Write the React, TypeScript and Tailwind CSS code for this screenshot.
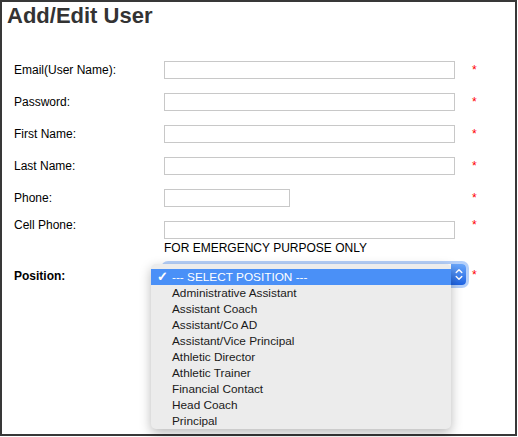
import React from 'react';

const simpleRows = [
  { label: 'Email(User Name):', wide: true },
  { label: 'Password:', wide: true },
  { label: 'First Name:', wide: true },
  { label: 'Last Name:', wide: true },
  { label: 'Phone:', wide: false },
];

const positions = [
  'Administrative Assistant',
  'Assistant Coach',
  'Assistant/Co AD',
  'Assistant/Vice Principal',
  'Athletic Director',
  'Athletic Trainer',
  'Financial Contact',
  'Head Coach',
  'Principal',
];

const Required = ({ className = '' }: { className?: string }) => (
  <span className={`text-[12px] text-[#ff0000] ${className}`}>*</span>
);

const TextBox = ({ wide }: { wide: boolean }) => (
  <div
    className={`h-[18px] border border-[#c8c8c8] bg-white ${wide ? 'w-[291px]' : 'w-[126px]'}`}
  />
);

const Stepper = () => (
  <svg width="8" height="13" viewBox="0 0 8 13" fill="none">
    <path d="M1.2 4.6 L4 1.8 L6.8 4.6" stroke="white" strokeWidth="1.4" strokeLinecap="round" strokeLinejoin="round" />
    <path d="M1.2 8.4 L4 11.2 L6.8 8.4" stroke="white" strokeWidth="1.4" strokeLinecap="round" strokeLinejoin="round" />
  </svg>
);

const PositionSelect = () => (
  <div className="relative w-[302px] h-[21px]">
    <div className="absolute inset-0 rounded-[4px] bg-white shadow-[0_0_0_3px_rgba(120,170,245,0.55)]">
      <div className="absolute right-0 top-0 h-full w-[15px] rounded-r-[4px] bg-gradient-to-b from-[#6aa6fa] to-[#1d62e2] flex items-center justify-center">
        <Stepper />
      </div>
    </div>
    <div className="absolute left-[-13px] top-0 z-10 w-[300px] rounded-[5px] bg-[#ececec] pt-[5px] shadow-[0_4px_12px_rgba(0,0,0,0.28)] text-[11.8px] text-[#1a1a1a]">
      <div className="flex h-[16px] items-center bg-[#4a90f7] text-white">
        <span className="w-[21px] pl-[6px] text-[13px] font-bold leading-[16px]">✓</span>
        <span className="leading-[16px]">--- SELECT POSITION ---</span>
      </div>
      {positions.map((p) => (
        <div key={p} className="h-[16px] pl-[21px] leading-[16px]">
          {p}
        </div>
      ))}
    </div>
  </div>
);

export default function App() {
  return (
    <div className="w-[518px] h-[437px] bg-white font-['Liberation_Sans',Arial,sans-serif] text-black">
      <div className="w-[517px] h-[436px] border-2 border-[#383838]">
        <h1 className="pl-[5px] pt-[3px] text-[22px] leading-[22px] font-bold text-[#333]">Add/Edit User</h1>

        <div className="mt-[27px] pl-[12px] text-[12px]">
          {simpleRows.map((r) => (
            <div key={r.label} className="flex h-[32px] items-center">
              <span className="w-[150px] leading-[14px]">{r.label}</span>
              <div className="w-[291px]">
                <TextBox wide={r.wide} />
              </div>
              <Required className="ml-[17px] self-start mt-[7px] leading-[18px]" />
            </div>
          ))}

          <div className="flex items-start pt-[4px]">
            <span className="w-[150px] leading-[14px]">Cell Phone:</span>
            <div className="w-[291px]">
              <div className="mt-[3px]">
                <TextBox wide />
              </div>
              <div className="mt-[2px] leading-[14px]">FOR EMERGENCY PURPOSE ONLY</div>
            </div>
            <Required className="ml-[17px] leading-[14px]" />
          </div>

          <div className="mt-[9px] flex items-start">
            <span className="mt-[5px] w-[150px] leading-[14px] font-bold">Position:</span>
            <PositionSelect />
            <Required className="ml-[6px] mt-[4px] leading-[14px]" />
          </div>
        </div>
      </div>
    </div>
  );
}
